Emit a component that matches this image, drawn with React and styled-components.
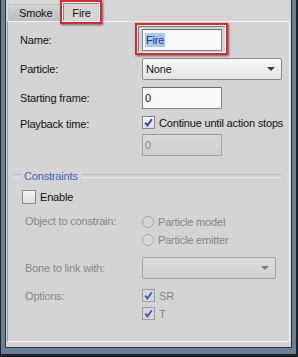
import React from 'react';
import styled, { createGlobalStyle } from 'styled-components';

const Global = createGlobalStyle`
  html, body { margin: 0; padding: 0; background: #d4d4d4; }
  body { font-family: "Liberation Sans", Arial, sans-serif; font-size: 11px; letter-spacing: -0.18px; color: #101010; }
  * { box-sizing: border-box; }
`;

const Frame = styled.div`
  position: relative;
  width: 298px;
  height: 357px;
  background: #6b7f95;
  border-left: 1px solid #1e2329;
  border-right: 2px solid #1e2329;
  border-bottom: 3px solid #1e2329;
  padding: 0 4px 6px 4px;
  display: flex;
`;

const Client = styled.div`
  flex: 1;
  background: #d4d4d4;
  border: 1px solid #2b3138;
  border-top: none;
  display: flex;
  flex-direction: column;
  padding: 0 1px 5px 1px;
`;

const TabBar = styled.div`
  height: 21px;
  display: flex;
  align-items: flex-end;
  background: #d6d6d6;
  padding-left: 1px;
`;

const Tab = styled.div`
  height: ${p => (p.$active ? 19 : 17)}px;
  padding: 0 ${p => (p.$active ? 8 : 10)}px;
  display: flex;
  align-items: center;
  color: #111;
  background: ${p => (p.$active ? '#d4d4d4' : 'linear-gradient(#d2d2d2, #bdbdbd)')};
  border-top: 1px solid ${p => (p.$active ? '#f4f4f4' : '#c4c4c4')};
  border-left: 1px solid ${p => (p.$active ? '#f4f4f4' : '#c4c4c4')};
  border-right: 1px solid ${p => (p.$active ? '#8e8e8e' : '#b0b0b0')};
  margin-bottom: ${p => (p.$active ? -1 : 0)}px;
  position: relative;
  z-index: ${p => (p.$active ? 1 : 0)};
`;

const Pane = styled.div`
  flex: 1;
  border: 1px solid #f2f2f2;
  border-left-color: #9a9a9a;
  padding: 7px 0 0 12px;
  display: flex;
  flex-direction: column;
`;

const Row = styled.div`
  display: grid;
  grid-template-columns: ${p => p.$label || 122}px 1fr;
  align-items: ${p => (p.$top ? 'start' : 'center')};
  margin-top: ${p => p.$mt || 0}px;
  padding-left: ${p => p.$indent || 0}px;
  min-height: ${p => p.$h || 0}px;
`;

const Label = styled.div`
  color: ${p => (p.$disabled ? '#868686' : '#101010')};
  line-height: 13px;
  padding-top: ${p => p.$pt || 0}px;
  white-space: nowrap;
`;

const Stack = styled.div`
  display: flex;
  flex-direction: column;
  gap: 5px;
  align-items: flex-start;
`;

const Input = styled.div`
  width: 80px;
  height: 22px;
  border: 1px solid ${p => (p.$disabled ? '#a4a4a4' : '#858585')};
  border-top-color: ${p => (p.$disabled ? '#9a9a9a' : '#6e6e6e')};
  background: ${p => (p.$disabled ? 'linear-gradient(#d9d9d9, #d0d0d0)' : '#f7f7f7')};
  color: ${p => (p.$disabled ? '#8a8a8a' : '#101010')};
  display: flex;
  align-items: center;
  padding-left: 2px;
`;

const Selected = styled.span`
  background: #a9c8ef;
  color: #1a357f;
  padding: 1px 1px;
`;

const Combo = styled.div`
  width: ${p => p.$w}px;
  height: 22px;
  border: 1px solid ${p => (p.$disabled ? '#a2a2a2' : '#8a8a8a')};
  border-radius: 2px;
  background: ${p => (p.$disabled ? 'linear-gradient(#dedede, #cfcfcf)' : 'linear-gradient(#f7f7f7, #e4e4e4)')};
  display: flex;
  align-items: center;
  justify-content: space-between;
  padding: 0 6px 0 3px;
  color: #101010;
`;

const Arrow = styled.span`
  width: 0;
  height: 0;
  border-left: 4px solid transparent;
  border-right: 4px solid transparent;
  border-top: 4px solid ${p => (p.$disabled ? '#7c7c7c' : '#3a3a3a')};
`;

const CheckLine = styled.div`
  display: flex;
  align-items: center;
  gap: 4px;
  height: 13px;
  color: ${p => (p.$disabled ? '#868686' : '#101010')};
  white-space: nowrap;
`;

const Box = styled.span`
  width: ${p => p.$size || 13}px;
  height: ${p => p.$size || 13}px;
  flex: none;
  border: 1px solid ${p => (p.$disabled ? '#9c9c9c' : '#8a8a8a')};
  background: ${p => (p.$disabled ? '#d8d8d8' : 'linear-gradient(#f6f6f6, #dedede)')};
  display: flex;
  align-items: center;
  justify-content: center;
`;

const Radio = styled.span`
  width: 12px;
  height: 12px;
  flex: none;
  border-radius: 50%;
  border: 1px solid #a9a9a9;
  background: #d6d6d6;
`;

const GroupHeader = styled.div`
  display: flex;
  align-items: center;
  height: 14px;
  margin: 13px 8px 0 -7px;
  color: #3f5fc6;
  &::before, &::after {
    content: '';
    height: 2px;
    border-top: 1px solid #bcbcbc;
    border-bottom: 1px solid #e6e6e6;
  }
  &::before { width: 8px; }
  &::after { flex: 1; }
`;

const HeaderText = styled.span`
  padding: 0 4px 0 3px;
`;

const Annot = styled.div`
  position: absolute;
  left: ${p => p.$x}px;
  top: ${p => p.$y}px;
  width: ${p => p.$w}px;
  height: ${p => p.$h}px;
  border: 2px solid #e0262a;
  box-shadow: inset 0 0 0 1px #ffffff, inset 1px 1px 0 1px rgba(40, 50, 60, 0.55), 1px 1px 2px rgba(40, 55, 75, 0.7);
  pointer-events: none;
  z-index: 5;
`;

const Check = ({ disabled }) => (
  <svg width="9" height="9" viewBox="0 0 9 9">
    <path d="M1.2 4.6 L3.4 7.4 L7.9 1.2" fill="none" stroke={disabled ? '#3e5cc0' : '#2444b4'} strokeWidth="1.9" strokeLinejoin="miter" />
  </svg>
);

export default function App() {
  return (
    <>
      <Global />
      <Frame>
        <Client>
          <TabBar>
            <Tab>Smoke</Tab>
            <Tab $active>Fire</Tab>
          </TabBar>
          <Pane>
            <Row $h={22}>
              <Label>Name:</Label>
              <Input><Selected>Fire</Selected></Input>
            </Row>
            <Row $mt={7} $h={22}>
              <Label>Particle:</Label>
              <Combo $w={140}>None<Arrow /></Combo>
            </Row>
            <Row $mt={7} $h={22}>
              <Label>Starting frame:</Label>
              <Input>0</Input>
            </Row>
            <Row $mt={7} $top>
              <Label $pt={2}>Playback time:</Label>
              <Stack>
                <CheckLine><Box><Check /></Box>Continue until action stops</CheckLine>
                <Input $disabled>0</Input>
              </Stack>
            </Row>
            <GroupHeader><HeaderText>Constraints</HeaderText></GroupHeader>
            <Row $mt={7} $indent={2} $label={120}>
              <CheckLine><Box $size={14} />Enable</CheckLine>
            </Row>
            <Row $mt={12} $top $indent={5} $label={117}>
              <Label $disabled>Object to constrain:</Label>
              <Stack>
                <CheckLine $disabled><Radio />Particle model</CheckLine>
                <CheckLine $disabled><Radio />Particle emitter</CheckLine>
              </Stack>
            </Row>
            <Row $mt={11} $h={22} $indent={5} $label={117}>
              <Label $disabled>Bone to link with:</Label>
              <Combo $w={134} $disabled><span /><Arrow $disabled /></Combo>
            </Row>
            <Row $mt={10} $top $indent={5} $label={117}>
              <Label $disabled $pt={1}>Options:</Label>
              <Stack>
                <CheckLine $disabled><Box $disabled><Check disabled /></Box>SR</CheckLine>
                <CheckLine $disabled><Box $disabled><Check disabled /></Box>T</CheckLine>
              </Stack>
            </Row>
          </Pane>
        </Client>
        <Annot $x={59} $y={0} $w={42} $h={24} />
        <Annot $x={134} $y={23} $w={93} $h={32} />
      </Frame>
    </>
  );
}
